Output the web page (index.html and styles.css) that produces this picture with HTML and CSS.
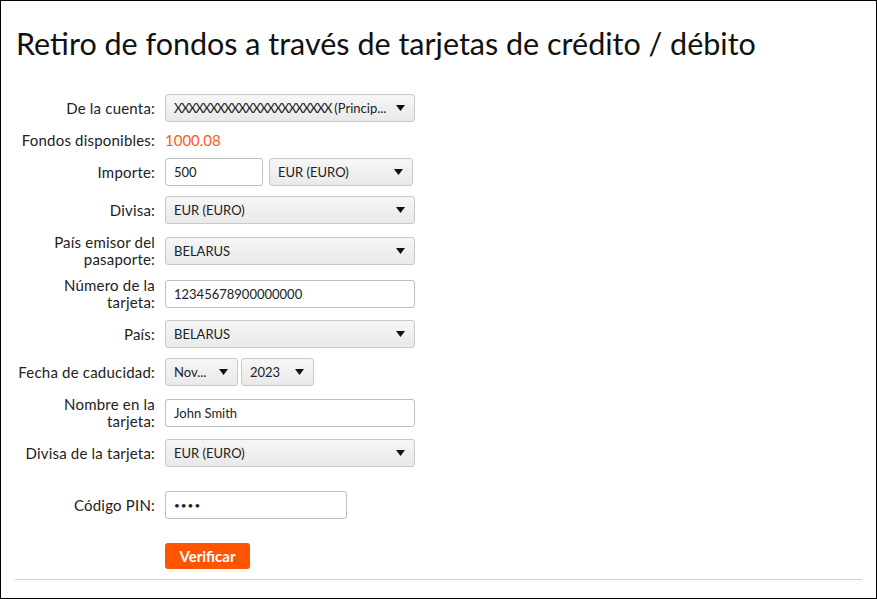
FILE: index.html
```html
<!DOCTYPE html>
<html lang="es">
<head>
    <meta charset="UTF-8">
    <meta name="viewport" content="width=device-width, initial-scale=1.0">
    <title>Retiro de fondos</title>
    <link rel="stylesheet" href="styles.css">
</head>
<body>
    <div class="page">
        <h1 class="title">Retiro de fondos a través de tarjetas de crédito / débito</h1>

        <form class="form">
            <div class="row">
                <label class="label">De la cuenta:</label>
                <div class="field">
                    <div class="select select-full">
                        <span class="select-text"><span class="mask">XXXXXXXXXXXXXXXXXXXXXX</span> (Princip...</span>
                        <svg class="arrow" width="9" height="6" viewBox="0 0 9 6"><polygon points="0,0 9,0 4.5,6" fill="#111"/></svg>
                    </div>
                </div>
            </div>

            <div class="row row-text">
                <span class="label">Fondos disponibles:</span>
                <span class="funds">1000.08</span>
            </div>

            <div class="row">
                <label class="label">Importe:</label>
                <div class="field">
                    <input class="input input-amount" type="text" value="500">
                    <div class="select select-currency">
                        <span class="select-text">EUR (EURO)</span>
                        <svg class="arrow" width="9" height="6" viewBox="0 0 9 6"><polygon points="0,0 9,0 4.5,6" fill="#111"/></svg>
                    </div>
                </div>
            </div>

            <div class="row">
                <label class="label">Divisa:</label>
                <div class="field">
                    <div class="select select-full">
                        <span class="select-text">EUR (EURO)</span>
                        <svg class="arrow" width="9" height="6" viewBox="0 0 9 6"><polygon points="0,0 9,0 4.5,6" fill="#111"/></svg>
                    </div>
                </div>
            </div>

            <div class="row row-tall">
                <label class="label">País emisor del<br>pasaporte:</label>
                <div class="field">
                    <div class="select select-full">
                        <span class="select-text">BELARUS</span>
                        <svg class="arrow" width="9" height="6" viewBox="0 0 9 6"><polygon points="0,0 9,0 4.5,6" fill="#111"/></svg>
                    </div>
                </div>
            </div>

            <div class="row row-tall">
                <label class="label">Número de la<br>tarjeta:</label>
                <div class="field">
                    <input class="input input-full" type="text" value="12345678900000000">
                </div>
            </div>

            <div class="row">
                <label class="label">País:</label>
                <div class="field">
                    <div class="select select-full">
                        <span class="select-text">BELARUS</span>
                        <svg class="arrow" width="9" height="6" viewBox="0 0 9 6"><polygon points="0,0 9,0 4.5,6" fill="#111"/></svg>
                    </div>
                </div>
            </div>

            <div class="row">
                <label class="label">Fecha de caducidad:</label>
                <div class="field field-date">
                    <div class="select select-small">
                        <span class="select-text">Nov...</span>
                        <svg class="arrow" width="9" height="6" viewBox="0 0 9 6"><polygon points="0,0 9,0 4.5,6" fill="#111"/></svg>
                    </div>
                    <div class="select select-small">
                        <span class="select-text">2023</span>
                        <svg class="arrow" width="9" height="6" viewBox="0 0 9 6"><polygon points="0,0 9,0 4.5,6" fill="#111"/></svg>
                    </div>
                </div>
            </div>

            <div class="row row-tall">
                <label class="label">Nombre en la<br>tarjeta:</label>
                <div class="field">
                    <input class="input input-full" type="text" value="John Smith">
                </div>
            </div>

            <div class="row">
                <label class="label">Divisa de la tarjeta:</label>
                <div class="field">
                    <div class="select select-full">
                        <span class="select-text">EUR (EURO)</span>
                        <svg class="arrow" width="9" height="6" viewBox="0 0 9 6"><polygon points="0,0 9,0 4.5,6" fill="#111"/></svg>
                    </div>
                </div>
            </div>

            <div class="row row-spaced">
                <label class="label">Código PIN:</label>
                <div class="field">
                    <input class="input input-pin" type="password" value="1234">
                </div>
            </div>

            <div class="row row-spaced row-button">
                <span class="label"></span>
                <button class="button" type="submit">Verificar</button>
            </div>
        </form>

        <hr class="divider">
    </div>
</body>
</html>
```

FILE: styles.css
```css
html, body {
    margin: 0;
    padding: 0;
}
body {
    font-family: Lato, "Open Sans", sans-serif;
    color: #1a1a1a;
    background: #fff;
}
.page {
    box-sizing: border-box;
    width: 877px;
    height: 599px;
    border: 1px solid #000;
    padding: 0 14px;
    overflow: hidden;
}
.title {
    margin: 24px 0 33px 1px;
    font-size: 30.5px;
    font-weight: 400;
    line-height: 36px;
    color: #111;
}
.form {
    display: flex;
    flex-direction: column;
    gap: 10px;
}
.row {
    display: flex;
    align-items: center;
    gap: 10px;
    min-height: 28px;
}
.row-text {
    min-height: 0;
    height: 16px;
}
.row-tall {
    min-height: 33px;
}
.row-spaced {
    margin-top: 14px;
}
.row-button {
    min-height: 0;
}
.label {
    width: 140px;
    flex: none;
    text-align: right;
    font-size: 15px;
    letter-spacing: 0.2px;
    line-height: 16.5px;
    color: #222;
}
.funds {
    font-size: 15px;
    line-height: 16px;
    color: #ff5a1a;
}
.field {
    display: flex;
    gap: 6px;
}
.field-date {
    gap: 3px;
}
.select {
    box-sizing: border-box;
    height: 28px;
    display: flex;
    align-items: center;
    padding: 0 9px 0 8px;
    border: 1px solid #c9c9c9;
    border-radius: 3px;
    background: linear-gradient(#f6f6f6, #e9e9e9);
    font-size: 13px;
    color: #222;
}
.select-text {
    flex: 1;
    white-space: nowrap;
    overflow: hidden;
}
.mask {
    letter-spacing: -1.3px;
}
.arrow {
    flex: none;
    margin-left: 6px;
}
.select-full {
    width: 250px;
}
.select-currency {
    width: 144px;
}
.select-small {
    width: 73px;
}
.input {
    box-sizing: border-box;
    height: 28px;
    padding: 0 8px;
    border: 1px solid #bdbdbd;
    border-radius: 3px;
    background: #fff;
    font-family: Lato, "Open Sans", sans-serif;
    font-size: 13px;
    color: #222;
    outline: none;
}
.input-full {
    width: 250px;
}
.input-amount {
    width: 98px;
}
.input-pin {
    width: 182px;
    font-size: 10px;
    letter-spacing: 1px;
}
.button {
    height: 26px;
    width: 85px;
    padding: 0;
    border: none;
    border-radius: 3px;
    background: #ff5500;
    color: #fff;
    font-family: Lato, "Open Sans", sans-serif;
    font-size: 15px;
    font-weight: 700;
}
.divider {
    margin: 10px 0 0;
    border: none;
    border-top: 1px solid #d3d3d3;
}
```
